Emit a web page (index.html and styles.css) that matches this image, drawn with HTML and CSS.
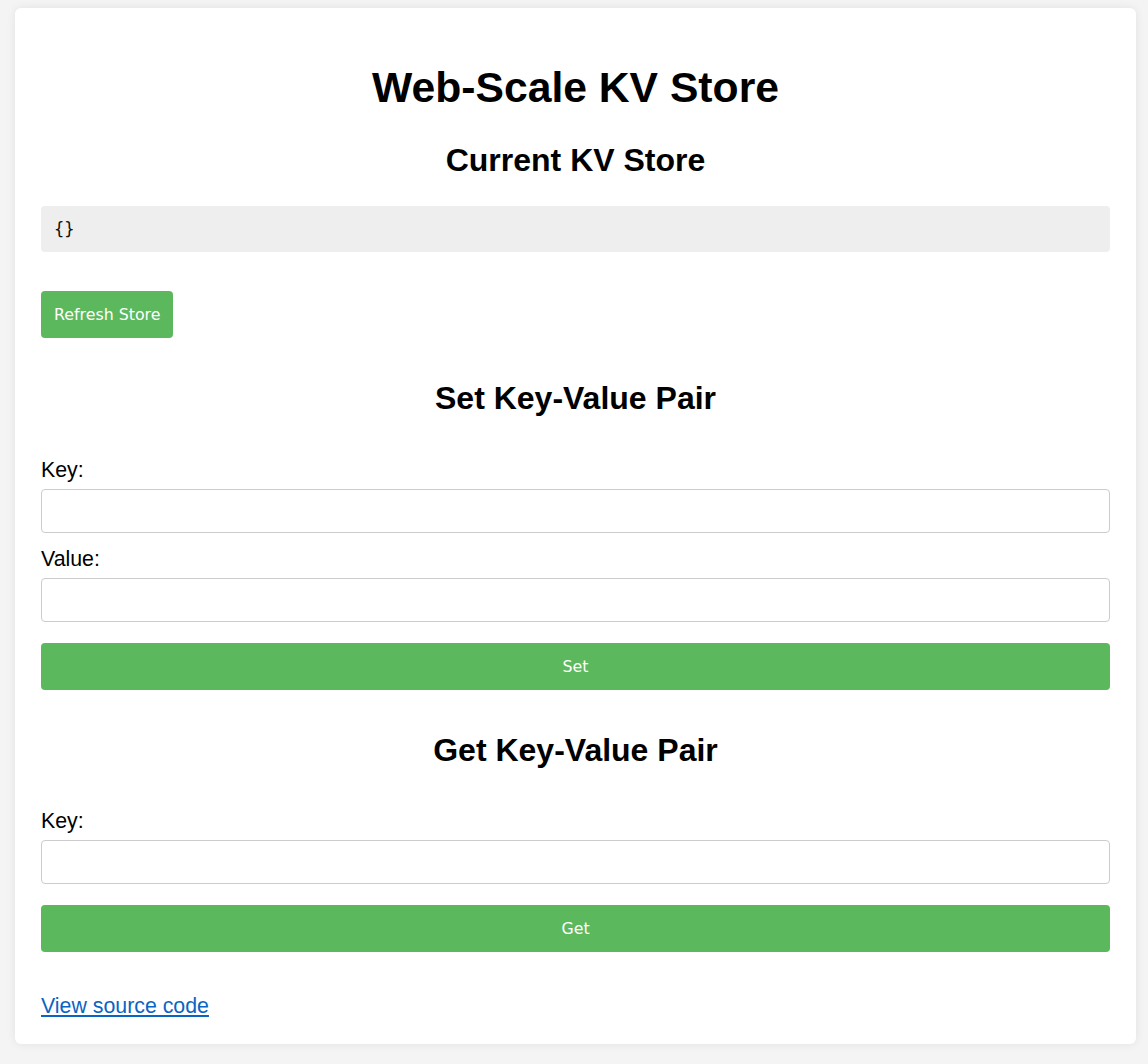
FILE: index.html
```html
<!DOCTYPE html>
<html lang="en">
<head>
<meta charset="utf-8">
<title>Web-Scale KV Store</title>
<link rel="stylesheet" href="styles.css">
</head>
<body>
<div class="card">
  <h1 class="title">Web-Scale KV Store</h1>
  <h2 class="section-title first">Current KV Store</h2>
  <pre class="store">{}</pre>
  <button class="btn btn-refresh">Refresh Store</button>

  <h2 class="section-title">Set Key-Value Pair</h2>
  <label class="field-label first-label" for="set-key">Key:</label>
  <input class="field-input" id="set-key" type="text">
  <label class="field-label" for="set-value">Value:</label>
  <input class="field-input" id="set-value" type="text">
  <button class="btn btn-full">Set</button>

  <h2 class="section-title">Get Key-Value Pair</h2>
  <label class="field-label first-label" for="get-key">Key:</label>
  <input class="field-input" id="get-key" type="text">
  <button class="btn btn-full">Get</button>

  <a class="source-link" href="#">View source code</a>
</div>
</body>
</html>
```

FILE: styles.css
```css
html, body {
  margin: 0;
  padding: 0;
}
body {
  background: #f4f4f4;
  font-family: "Liberation Sans", Arial, sans-serif;
  font-size: 21.33px;
  color: #000;
  padding: 8px 12px 20px 15px;
}
.card {
  background: #fff;
  border-radius: 6px;
  box-shadow: 0 0 10px rgba(0, 0, 0, 0.08);
  padding: 27px 26px 26px;
  display: flex;
  flex-direction: column;
  align-items: flex-start;
}
.title {
  align-self: stretch;
  text-align: center;
  font-size: 42.67px;
  line-height: 49px;
  font-weight: bold;
  margin: 28px 0 30px;
}
.section-title {
  align-self: stretch;
  text-align: center;
  font-size: 32px;
  line-height: 37px;
  font-weight: bold;
  margin: 42px 0 0;
}
.section-title.first {
  margin-top: 0;
}
.store {
  align-self: stretch;
  box-sizing: border-box;
  margin: 27px 0 0;
  height: 46px;
  background: #eee;
  border-radius: 4px;
  padding: 0 13px;
  font-family: "DejaVu Sans Mono", "Liberation Mono", monospace;
  font-size: 17px;
  line-height: 46px;
  color: #111;
}
.btn {
  box-sizing: border-box;
  height: 47px;
  background: #5cb85c;
  color: #fff;
  border: none;
  border-radius: 4px;
  font-family: "DejaVu Sans", Tahoma, sans-serif;
  font-size: 15.8px;
  padding: 0 13px;
  cursor: pointer;
}
.btn-refresh {
  margin-top: 39px;
}
.btn-full {
  align-self: stretch;
  margin-top: 21px;
}
.field-label {
  display: block;
  line-height: 24.5px;
  margin-top: 14.3px;
}
.field-label.first-label {
  margin-top: 40.5px;
}
.field-input {
  align-self: stretch;
  box-sizing: border-box;
  height: 44px;
  margin: 6.5px 0 0;
  border: 1px solid #ccc;
  border-radius: 4px;
  padding: 0 10px;
  font-family: "Liberation Sans", Arial, sans-serif;
  font-size: 18px;
  background: #fff;
}
.source-link {
  margin-top: 41.5px;
  line-height: 24.5px;
  color: #0a64c2;
  text-decoration: underline;
}
```
